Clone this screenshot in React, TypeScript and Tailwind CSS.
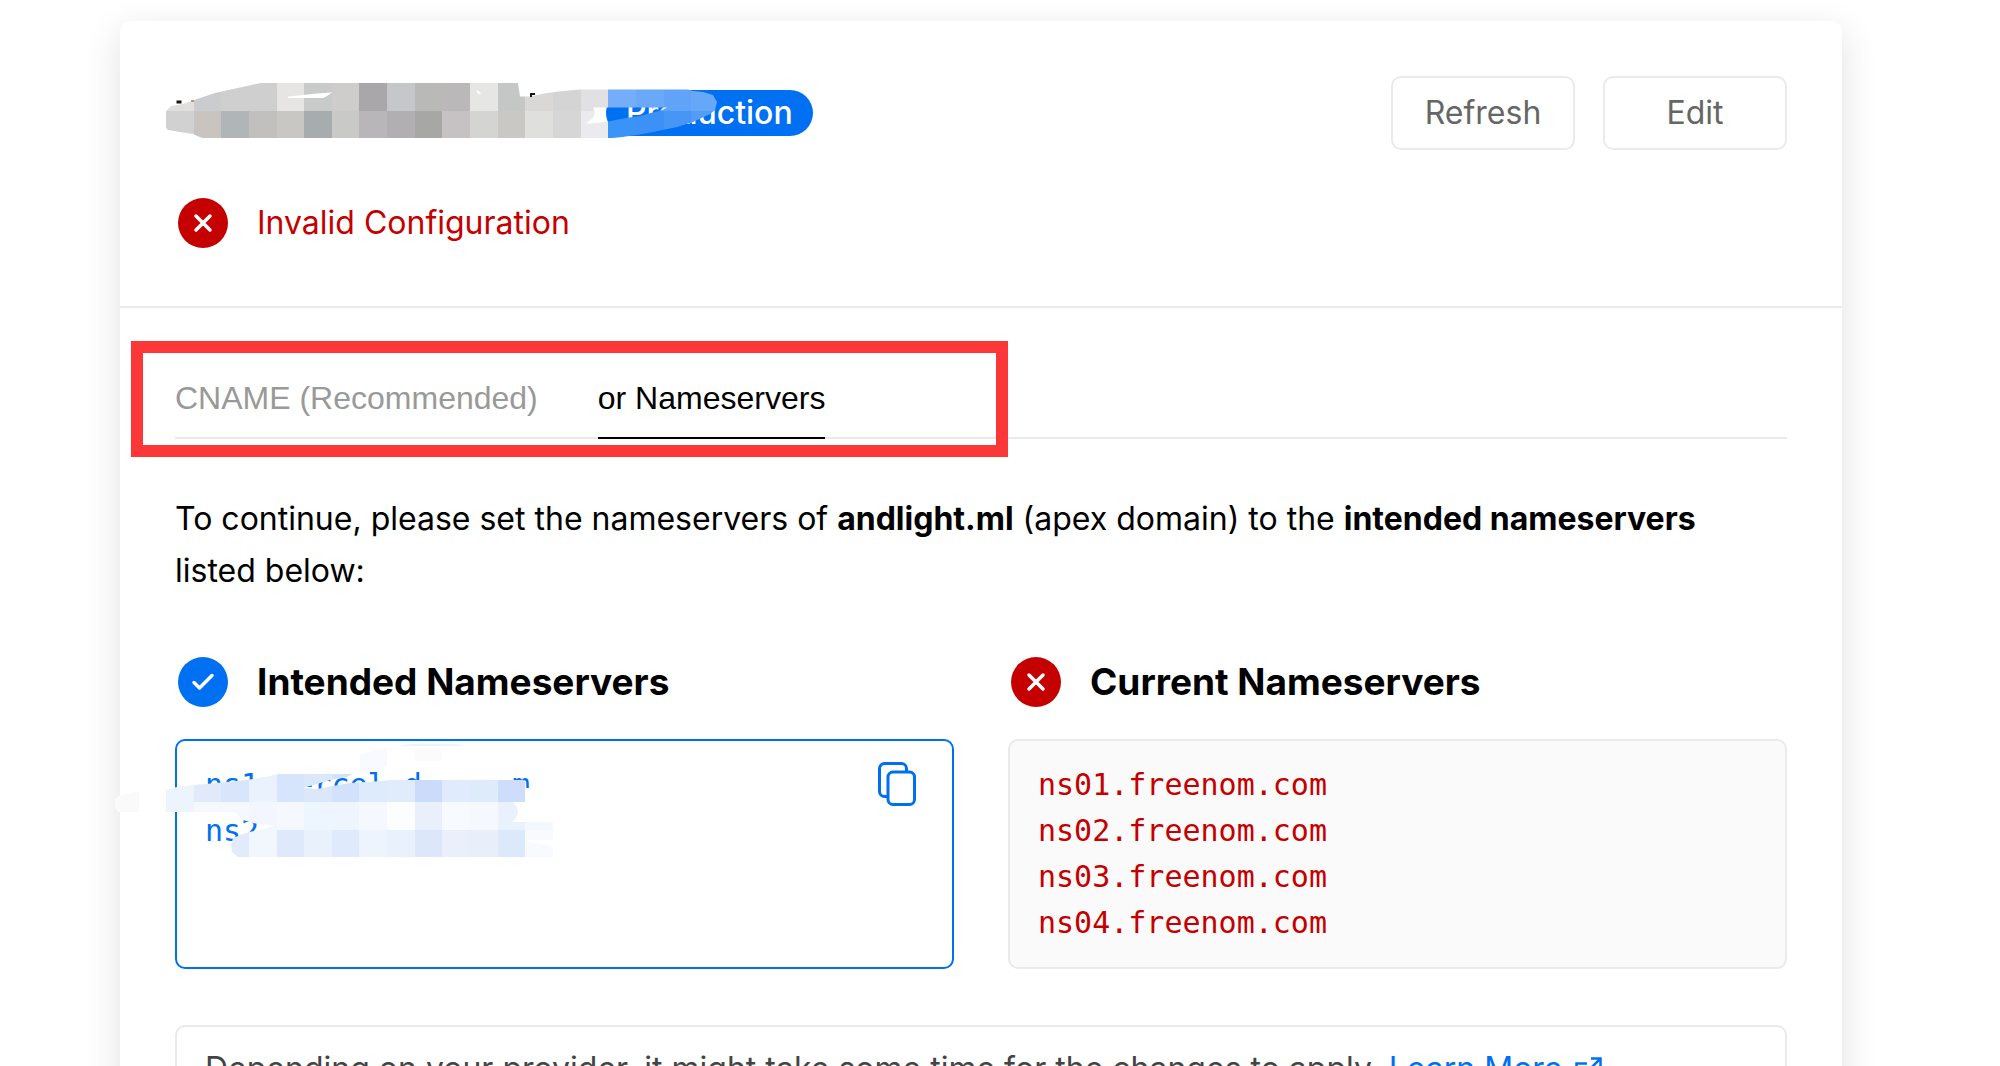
import { ReactNode } from "react";

const CELL = 27.65;

const domainMosaic = {
  col: 6,
  row: 3,
  rows: [
    "e0dfde cacccf cfcfd0 cfcfcf e6e5e3 c9cbca cfcdcb aaa7ab c6c7ca b9b9b7 bab8b9 e6e6e4 c5c7c6 d9d8d6 d4d4d4 e1e1e3 74adf9 6aa8f8 60a3f8 66a7f7",
    "d1d1d2 c9c4c0 b0b5b8 c1c0be c8c7c4 a7adaf c9c9c7 b9b6b9 b1afb2 a7a7a5 c6c1c2 d4d5d3 c9c8c4 dfdfdd d6d6d6 ebebef 3a93f7 3b91f6 4796f6 559cf5",
  ],
};

const serverMosaic = {
  col: 6,
  row: 28,
  rows: [
    "ecf4fe e1e9fa d9e5fb e9f2fd d7e5fc dbe8fb d2e2fc deebfc e0ebfc cbdcfa e0ecfd deebfb cdddfb",
    "ecf4fe f5f9fe f5f9fe f3f6fe f5f8fe edf5fe eff5fe f5f8fe fbfdff e9f0fc f7faff f5f8fe e9f1fc f3f7fe",
    "e1ebfc e1ebfc e1ebfc f2f6fd dee9fb e9f1fc dfebfc edf4fe e9f1fc dce8fa e9f0fb e8effa dce9fb f8fafe",
  ],
};

const intended = ["ns1.vercel-dns.com", "ns2.vercel-dns.com"];
const current = [
  "ns01.freenom.com",
  "ns02.freenom.com",
  "ns03.freenom.com",
  "ns04.freenom.com",
];

function Cells({ col, row, rows }: typeof domainMosaic) {
  return (
    <g shapeRendering="crispEdges">
      {rows.map((line, y) =>
        line
          .split(" ")
          .map((color, x) => (
            <rect
              key={`${x}-${y}`}
              x={(col + x) * CELL}
              y={(row + y) * CELL}
              width={CELL}
              height={CELL}
              fill={`#${color}`}
            />
          )),
      )}
    </g>
  );
}

function DomainMosaic() {
  return (
    <svg
      viewBox="160 80 580 62"
      className="pointer-events-none absolute -top-[10px] -left-[15px] h-[62px] w-[580px]"
      aria-hidden="true"
    >
      <clipPath id="domain-stroke">
        <path
          clipRule="evenodd"
          d="M166 111L171 106L183 104L197 99L215 93L233 89L261 83H518L520 96.500H530L547 93L563 91L580 89.500H688L693 91L703 92L713 95L717 102L715 110L710 114L693 122L677 127L653 132L637 135L622 137L608 138.500H203L193 134L180 132L168 130L166 128ZM593 107.500H667L662 110L640 116L626 118L608 121.500H606V122L590 123.500H586L593 118L595 113Z"
        />
      </clipPath>
      <g clipPath="url(#domain-stroke)">
        <Cells {...domainMosaic} />
      </g>
      <path
        fill="#fff"
        d="M288 96.500L303 95L317 93.500L332 92.500L327 96L323 98H288ZM476 91L478 90.500L481 93.500L479 94.500Z"
      />
      <path fill="#1b1712" d="M176.500 100.500h5v3h-5zM530 93h5v2h-3v2h-2z" />
      <path fill="#b99a7c" d="M191 100h3v2h-3z" />
    </svg>
  );
}

function ServerMosaic() {
  return (
    <svg
      viewBox="110 738 460 122"
      className="pointer-events-none absolute -top-[3px] -left-[67px] h-[122px] w-[460px]"
      aria-hidden="true"
    >
      <clipPath id="server-stroke">
        <path d="M166 790L177 787L194 785L217 783L247 780L270 776L278 774H352L347 777L330 780L317 784L303 788L317 789L333 786L350 783L383 781L390 780H523L525 782V802H513L517 807L518 813L516 818L512 822H553V840H528V842L543 844L553 847V857H238L232 852L231 845L233 838L243 834L250 832L267 828L275 826L253 823L243 820L237 815L235 812H166Z" />
      </clipPath>
      <path
        fill="#fff"
        d="M525.500 788h6v14h-6zM421 774h91v7h-91zM525 838h8v8h-8z"
      />
      <g clipPath="url(#server-stroke)">
        <Cells {...serverMosaic} />
      </g>
      <path fill="#f8faff" d="M360 755L373 751L387 748V767L360 772Z" />
      <path fill="#fbfbfb" d="M415 748h27v13h-27z" />
      <path fill="#ecf4fe" d="M402 745L420 743.500H450L461 745V746H402Z" />
      <path fill="#fafafa" d="M139 791V812H118L115 807V800L118 796Z" />
    </svg>
  );
}

function ErrorIcon() {
  return (
    <svg viewBox="0 0 50 50" className="size-[50px] shrink-0" aria-hidden="true">
      <circle cx="25" cy="25" r="25" fill="#c50000" />
      <path
        d="M18 18L32 32M32 18L18 32"
        stroke="#fff"
        strokeWidth="3.500"
        strokeLinecap="round"
      />
    </svg>
  );
}

function CheckIcon() {
  return (
    <svg viewBox="0 0 50 50" className="size-[50px] shrink-0" aria-hidden="true">
      <circle cx="25" cy="25" r="25" fill="#0070f3" />
      <path
        d="M16 25.500L21.500 31L34 18.500"
        fill="none"
        stroke="#fff"
        strokeWidth="3.500"
        strokeLinecap="round"
        strokeLinejoin="round"
      />
    </svg>
  );
}

function CopyIcon() {
  return (
    <svg viewBox="0 1 40 46" className="h-[46px] w-10" fill="none" aria-hidden="true">
      <g stroke="#0070f3" strokeWidth="3">
        <path d="M10.500 35.500H7.500a5 5 0 0 1-5-5V7.500a5 5 0 0 1 5-5h17a5 5 0 0 1 5 5V10.500" />
        <rect x="11" y="11" width="26.500" height="32.500" rx="5" />
      </g>
    </svg>
  );
}

function ExternalIcon() {
  return (
    <svg
      viewBox="0 0 28 28"
      className="ml-3 inline-block size-7 align-[-5px]"
      fill="none"
      stroke="currentColor"
      strokeWidth="2.500"
      aria-hidden="true"
    >
      <path d="M13 6.500H2.500V26H22V15M17 1.500h9.500V11M26.500 1.500L14 14" />
    </svg>
  );
}

function ColumnTitle({ icon, children }: { icon: ReactNode; children: ReactNode }) {
  return (
    <h3 className="flex items-center gap-[29px] pl-[3px] text-[37px] leading-[50px] font-bold">
      {icon}
      {children}
    </h3>
  );
}

export default function App() {
  return (
    <main className="h-screen overflow-hidden bg-white pt-[21px] pr-[158px] pl-[120px] font-['Inter',sans-serif] text-[32px] text-black">
      <section className="rounded-[10px] bg-white shadow-[0_10px_36px_rgba(0,0,0,0.12)]">
        <header className="border-b-2 border-[#eaeaea] px-[55px] pt-[55px] pb-[58px]">
          <div className="flex items-center justify-between">
            <div className="relative flex items-center">
              <span className="w-[431px]" />
              <span className="rounded-full bg-[#0070f3] px-5 leading-[46px] font-medium text-white">
                Production
              </span>
              <DomainMosaic />
            </div>
            <div className="flex gap-7">
              <button className="h-[74px] w-[184px] rounded-[10px] border-2 border-[#eaeaea] text-[#666]">
                Refresh
              </button>
              <button className="h-[74px] w-[184px] rounded-[10px] border-2 border-[#eaeaea] text-[#666]">
                Edit
              </button>
            </div>
          </div>
          <p className="mt-12 flex items-center gap-[29px] pl-[3px] leading-[50px] text-[#c50000]">
            <ErrorIcon />
            Invalid Configuration
          </p>
        </header>

        <div className="px-[55px] py-[55px]">
          <div className="relative flex gap-15 border-b-2 border-[#eaeaea] font-['Liberation_Sans',sans-serif] leading-[38px]">
            <button className="-mb-0.5 pt-4 pb-[22px] text-[#999]">
              CNAME (Recommended)
            </button>
            <button className="-mb-0.5 border-b-2 border-black pt-4 pb-5">
              or Nameservers
            </button>
            <div className="pointer-events-none absolute -top-[22px] -left-11 h-[116px] w-[877px] border-[12px] border-[#fc3737]" />
          </div>

          <p className="mt-[54px] pr-7 leading-[52px]">
            To continue, please set the nameservers of{" "}
            <strong className="font-bold">andlight.ml</strong> (apex domain) to
            the <strong className="font-bold">intended nameservers</strong> listed
            below:
          </p>

          <div className="mt-[60px] grid grid-cols-2 gap-x-[54px] gap-y-8">
            <ColumnTitle icon={<CheckIcon />}>Intended Nameservers</ColumnTitle>
            <ColumnTitle icon={<ErrorIcon />}>Current Nameservers</ColumnTitle>

            <div className="relative flex items-start justify-between rounded-[10px] border-2 border-[#0070f3] pt-[21px] pr-[35px] pb-[21px] pl-7">
              <ul className="font-['DejaVu_Sans_Mono',monospace] text-3xl leading-[46px] text-[#0070f3]">
                {intended.map((server) => (
                  <li key={server}>{server}</li>
                ))}
              </ul>
              <button aria-label="Copy nameservers">
                <CopyIcon />
              </button>
              <ServerMosaic />
            </div>

            <ul className="rounded-[10px] border-2 border-[#eaeaea] bg-[#fafafa] px-7 py-[21px] font-['DejaVu_Sans_Mono',monospace] text-3xl leading-[46px] text-[#c50000]">
              {current.map((server) => (
                <li key={server}>{server}</li>
              ))}
            </ul>
          </div>

          <p className="mt-14 rounded-[10px] border-2 border-[#eaeaea] px-7 py-4 leading-[52px] text-[#444]">
            Depending on your provider, it might take some time for the changes to
            apply.{" "}
            <a href="#" className="text-[#0070f3]">
              Learn More
              <ExternalIcon />
            </a>
          </p>
        </div>
      </section>
    </main>
  );
}
